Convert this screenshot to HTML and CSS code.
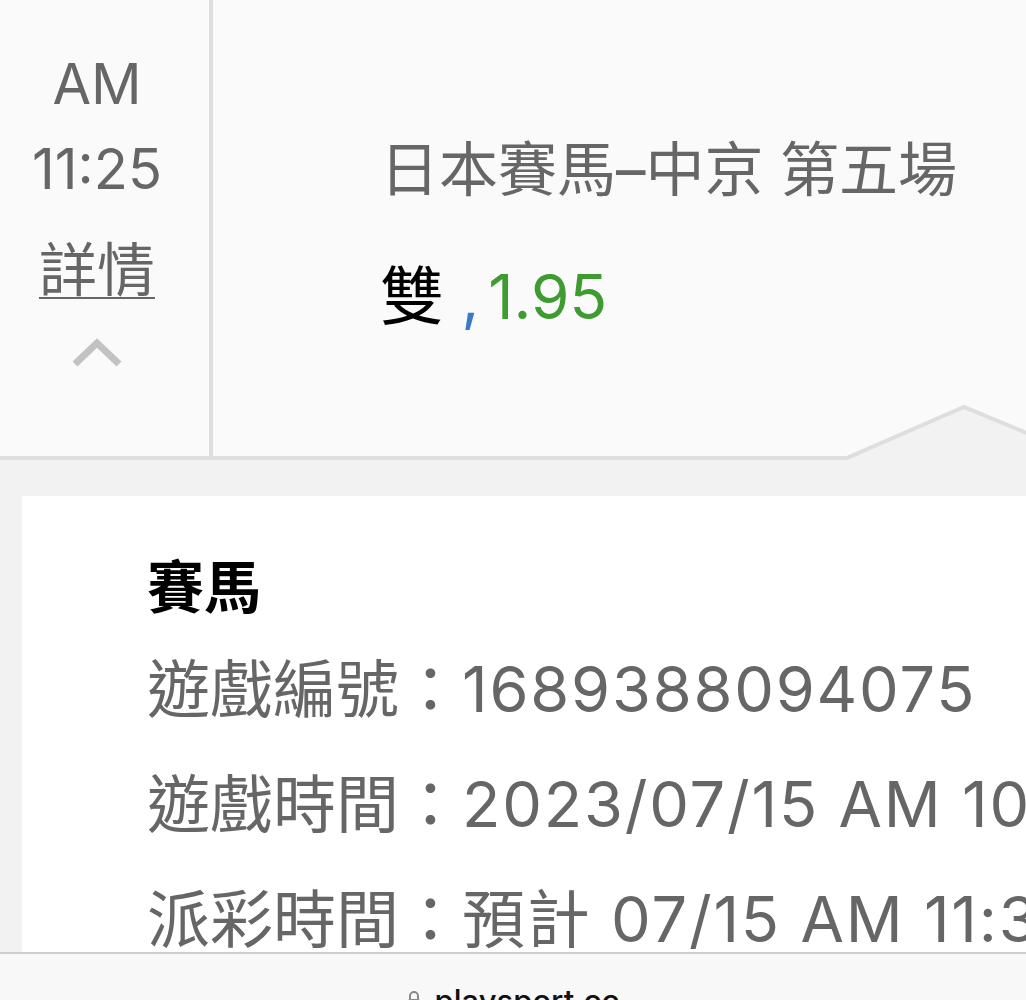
FILE: index.html
```html
<!DOCTYPE html>
<html>
<head>
  <title>投注紀錄</title>
  <meta name="viewport" content="width=device-width, initial-scale=1.0">
  <link rel="stylesheet" href="styles.css">
</head>
<body>
  <div class="bet-row">
    <div class="time-col">
      <div class="bet-time">AM<br>11:25</div>
      <a class="detail-link" href="#">詳情</a>
      <svg class="toggle" width="52" height="32" viewBox="0 0 52 32">
        <polyline points="4,28 26,7 48,28" fill="none" stroke="#c2c2c2" stroke-width="7"/>
      </svg>
    </div>

    <div class="bet-info">
      <div class="game-title">日本賽馬–中京 第五場</div>
      <div class="pick">
        <span class="pick-name">雙</span> <span class="sep">,</span><span class="odds">1.95</span>
      </div>
    </div>

    <!-- popover arrow pointing at the row -->
    <svg class="pop-arrow" width="240" height="60" viewBox="0 0 240 60">
      <polygon points="0,54 117,3 234,54 240,54 240,60 0,60" fill="#f2f2f2"/>
      <polyline points="-6,54 0,54 117,3 240,54" fill="none" stroke="#dedede" stroke-width="4"/>
    </svg>
  </div>

  <div class="detail-panel">
    <div class="detail-card">
      <h3>賽馬</h3>
      <p>遊戲編號：<span class="val">1689388094075</span></p>
      <p>遊戲時間：<span class="val">2023/07/15 AM 10:50</span></p>
      <p>派彩時間：<span class="val">預計 07/15 AM 11:30</span></p>
      <p>投注金額：<span class="val">100</span></p>
    </div>
  </div>

  <div class="url-bar">
    <svg class="lock" width="14" height="20" viewBox="0 0 14 20">
      <path d="M3 9V6a4 4 0 0 1 8 0v3" fill="none" stroke="#888" stroke-width="2"/>
      <rect x="1" y="9" width="12" height="10" rx="2" fill="#888"/>
    </svg>
    <span>playsport.cc</span>
  </div>
</body>
</html>
```

FILE: styles.css
```css
html, body {
    margin: 0;
    padding: 0;
    overflow: hidden;
}

body {
    font-family: "Inter", "Noto Sans CJK TC", sans-serif;
    background-color: #f8f8f8;
    color: #666;
}

.bet-row {
    position: relative;
    display: flex;
    height: 456px;
    background-color: #fafafa;
    border-bottom: 4px solid #dedede;
}

.time-col {
    width: 213px;
    box-sizing: border-box;
    padding: 42px 15px 0 0;
    border-right: 4px solid #dedede;
    display: flex;
    flex-direction: column;
    align-items: center;
}

.bet-time {
    font-size: 56px;
    line-height: 85px;
    text-align: center;
}

.detail-link {
    display: block;
    margin-top: 18px;
    font-size: 58px;
    line-height: 80px;
    color: #666;
    text-decoration: underline;
    text-decoration-thickness: 2px;
    text-underline-offset: 6px;
}

.toggle {
    display: block;
    margin-top: 26px;
}

.bet-info {
    flex: 1;
    padding: 130px 0 0 167px;
    white-space: nowrap;
}

.game-title {
    font-size: 59px;
    line-height: 80px;
    color: #666;
}

.pick {
    margin-top: 36px;
    font-size: 62px;
    line-height: 100px;
}

.pick-name {
    color: #000;
    font-size: 64px;
}

.sep {
    color: #3a7bc8;
    margin-right: 9px;
}

.odds {
    color: #3d9b2f;
}

.pop-arrow {
    position: absolute;
    left: 847px;
    top: 404px;
}

.detail-panel {
    height: 492px;
    overflow: hidden;
    background-color: #f2f2f2;
    padding: 36px 0 0 22px;
    box-sizing: border-box;
}

.detail-card {
    background-color: #fff;
    min-height: 700px;
    padding: 52px 0 0 125px;
    white-space: nowrap;
}

.detail-card h3 {
    margin: 0 0 4px;
    font-size: 57px;
    line-height: 80px;
    font-weight: bold;
    color: #000;
}

.detail-card p {
    margin: 0;
    font-size: 63px;
    line-height: 115px;
    color: #666;
}

.detail-card .val {
    letter-spacing: 1.8px;
}

.url-bar {
    border-top: 2px solid #cfcfcf;
    padding-top: 27px;
    display: flex;
    justify-content: center;
    align-items: flex-start;
    font-size: 31px;
    line-height: 40px;
    font-weight: 500;
    color: #111;
}

.lock {
    margin: 9px 14px 0 0;
}
```
